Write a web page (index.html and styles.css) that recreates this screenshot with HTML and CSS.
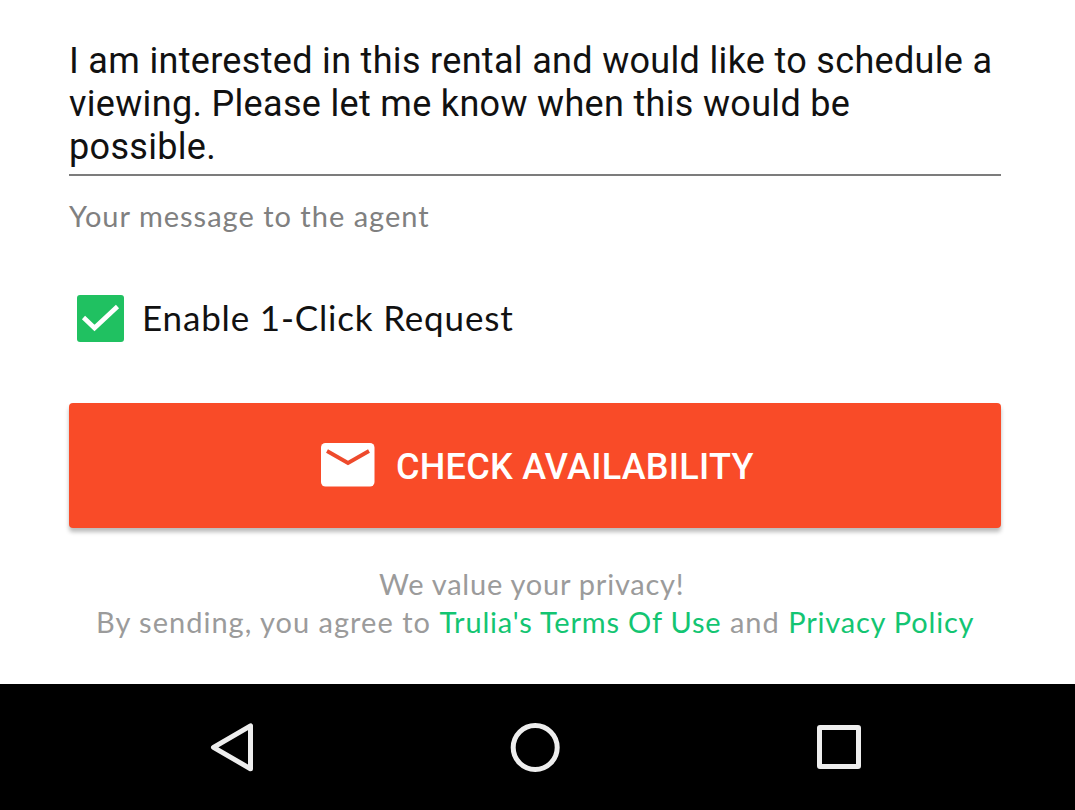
FILE: index.html
```html
<!DOCTYPE html>
<html lang="en">
<head>
<meta charset="utf-8">
<title>Check availability</title>
<link rel="stylesheet" href="styles.css">
</head>
<body>
<main class="form">
  <div class="message">I am interested in this rental and would like to schedule a<br>viewing. Please let me know when this would be<br>possible.</div>
  <div class="hint">Your message to the agent</div>
  <label class="option">
    <svg class="checkbox" viewBox="0 0 47 47"><rect width="47" height="47" rx="3" fill="#20c161"/><path d="M6.500 22.500L17.500 33L40.500 11.500" fill="none" stroke="#fff" stroke-width="4.600"/></svg>
    <span>Enable 1-Click Request</span>
  </label>
  <button class="submit">
    <svg class="mail" viewBox="0 0 54 44"><rect width="53.500" height="43.500" rx="4.500" fill="#fff"/><path d="M6 8L27 20 48 8" fill="none" stroke="#ee4a2c" stroke-width="3.800"/></svg>
    <span>CHECK AVAILABILITY</span>
  </button>
  <div class="privacy">
    <div class="value">We value your privacy!</div>
    <div class="terms">By sending, you agree to <a>Trulia's Terms Of Use</a> and <a>Privacy Policy</a></div>
  </div>
</main>
<nav class="navbar">
  <svg class="back" viewBox="0 0 48 52"><path d="M41.500 4.800V47.800L4.500 26.300Z"/></svg>
  <svg class="home" viewBox="0 0 52 52"><circle cx="25.200" cy="26.500" r="22"/></svg>
  <svg class="recent" viewBox="0 0 48 52"><rect x="4.500" y="6.500" width="39" height="39" rx=".5"/></svg>
</nav>
</body>
</html>
```
FILE: styles.css
```css
* { box-sizing: border-box; }
body { margin: 0; width: 1075px; height: 810px; overflow: hidden; display: flex; flex-direction: column; background: #fff; font-family: Lato, sans-serif; }
.form { height: 684px; padding: 40px 74px 0 69px; }
.message { height: 136px; border-bottom: 2px solid #7c7c7c; font: 36px/43px Roboto, sans-serif; letter-spacing: .32px; color: #111; white-space: nowrap; }
.hint { margin-top: 21px; font-size: 29px; line-height: 38px; letter-spacing: 1px; color: #808080; white-space: nowrap; }
.option { display: flex; align-items: center; gap: 18px; margin: 60px 0 0 8px; height: 47px; font-size: 35px; line-height: 44px; letter-spacing: .83px; color: #111; white-space: nowrap; }
.option span { margin-bottom: 3px; }
.checkbox { width: 47px; height: 47px; }
.submit { display: flex; align-items: center; gap: 22px; width: 932px; height: 125px; margin: 61px 0 0; padding: 0 0 0 252px; border: 0; border-radius: 4px; background: #f94b28; box-shadow: 0 4px 4px rgba(0,0,0,.27); color: #fff; font: 500 36px/42px Roboto, sans-serif; letter-spacing: .27px; white-space: nowrap; }
.submit span { margin: 2px 0 0 -1px; }
.mail { width: 54px; height: 44px; margin-bottom: 1px; }
.privacy { margin: 37px 0 0 28px; font-size: 29px; line-height: 38px; letter-spacing: .77px; color: #9b9b9b; white-space: nowrap; }
.value { padding-left: 282px; }
.terms { margin-left: -1px; letter-spacing: 1.01px; }
.privacy a { color: #13c572; letter-spacing: .8px; }
.navbar { display: flex; align-items: center; justify-content: space-between; height: 126px; padding: 0 212px 0 209px; background: #000; }
.navbar svg { height: 52px; fill: none; stroke: #eee; stroke-width: 5; stroke-linejoin: round; }
```
